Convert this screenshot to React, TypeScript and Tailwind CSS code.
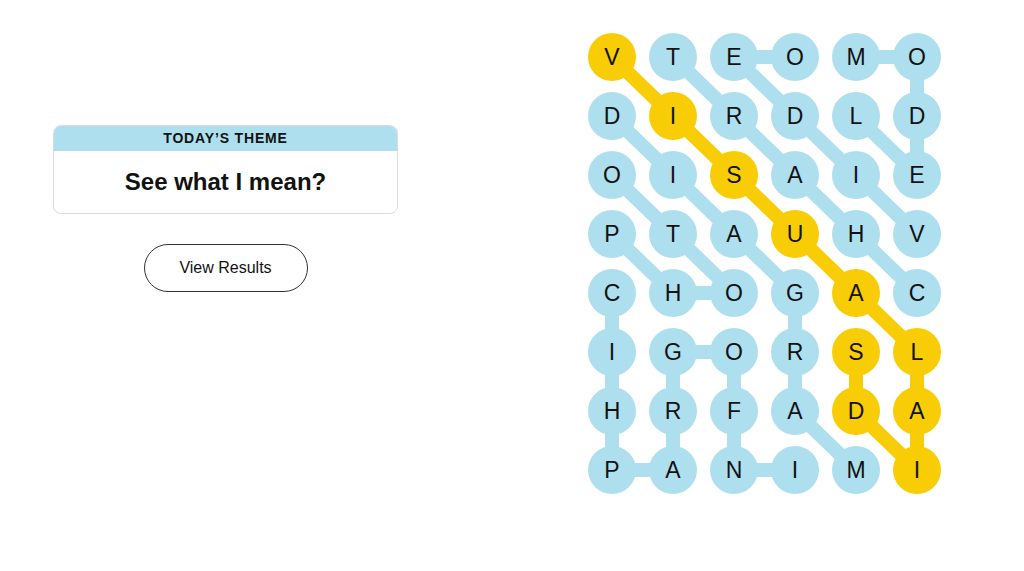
import React from "react";

const BOARD = [
  "VTEOMO",
  "DIRDLD",
  "OISAIE",
  "PTAUHV",
  "CHOGAC",
  "IGORSL",
  "HRFADA",
  "PANIMI",
];

type Cell = [number, number];

const FOUND: { word: string; path: Cell[]; spangram?: boolean }[] = [
  {
    word: "VISUALAIDS",
    spangram: true,
    path: [[0, 0], [1, 1], [2, 2], [3, 3], [4, 4], [5, 5], [6, 5], [7, 5], [6, 4], [5, 4]],
  },
  { word: "CHART", path: [[4, 5], [3, 4], [2, 3], [1, 2], [0, 1]] },
  { word: "VIDEO", path: [[3, 5], [2, 4], [1, 3], [0, 2], [0, 3]] },
  { word: "MODEL", path: [[0, 4], [0, 5], [1, 5], [2, 5], [1, 4]] },
  { word: "DIAGRAM", path: [[1, 0], [2, 1], [3, 2], [4, 3], [5, 3], [6, 3], [7, 4]] },
  { word: "PHOTO", path: [[3, 0], [4, 1], [4, 2], [3, 1], [2, 0]] },
  {
    word: "INFOGRAPHIC",
    path: [[7, 3], [7, 2], [6, 2], [5, 2], [5, 1], [6, 1], [7, 1], [7, 0], [6, 0], [5, 0], [4, 0]],
  },
];

const BLUE = "#aedfee";
const YELLOW = "#f8cd05";

// cell size 48, column pitch 61, row pitch 59
const cx = (c: number) => 24 + c * 61;
const cy = (r: number) => 24 + r * 59;

const spangramCells = new Set(
  FOUND.filter((w) => w.spangram).flatMap((w) => w.path.map(([r, c]) => `${r}-${c}`))
);

function Board() {
  return (
    <div className="relative w-[353px] h-[461px]">
      <svg className="absolute inset-0" width={353} height={461}>
        {FOUND.map((w) =>
          w.path.slice(1).map(([r, c], i) => {
            const [pr, pc] = w.path[i];
            return (
              <line
                key={`${w.word}-${i}`}
                x1={cx(pc)}
                y1={cy(pr)}
                x2={cx(c)}
                y2={cy(r)}
                stroke={w.spangram ? YELLOW : BLUE}
                strokeWidth={14}
                strokeLinecap="round"
              />
            );
          })
        )}
      </svg>
      <div className="relative grid grid-cols-[repeat(6,48px)] gap-x-[13px] gap-y-[11px]">
        {BOARD.map((row, r) =>
          row.split("").map((letter, c) => (
            <button
              key={`${r}-${c}`}
              className={`flex size-12 items-center justify-center rounded-full text-[23px] leading-none text-[#121212] ${
                spangramCells.has(`${r}-${c}`) ? "bg-[#f8cd05]" : "bg-[#aedfee]"
              }`}
            >
              {letter}
            </button>
          ))
        )}
      </div>
    </div>
  );
}

export default function App() {
  return (
    <div className="flex h-[571px] w-[1024px] bg-white font-['Liberation_Sans',Arial,sans-serif] text-[#121212]">
      <div className="ml-[53px] flex w-[345px] flex-col items-center pt-[125px]">
        <div className="w-full overflow-hidden rounded-lg border border-[#dcdcdc]">
          <div className="flex h-[25px] items-center justify-center bg-[#aedfee] text-[14px] font-bold tracking-[0.06em]">
            TODAY’S THEME
          </div>
          <div className="flex h-[62px] items-center justify-center text-[24px] font-bold">
            See what I mean?
          </div>
        </div>
        <button className="mt-[30px] flex h-12 w-[164px] items-center justify-center rounded-full border border-[#333] text-[16px]">
          View Results
        </button>
      </div>
      <div className="ml-[190px] pt-[33px]">
        <Board />
      </div>
    </div>
  );
}
